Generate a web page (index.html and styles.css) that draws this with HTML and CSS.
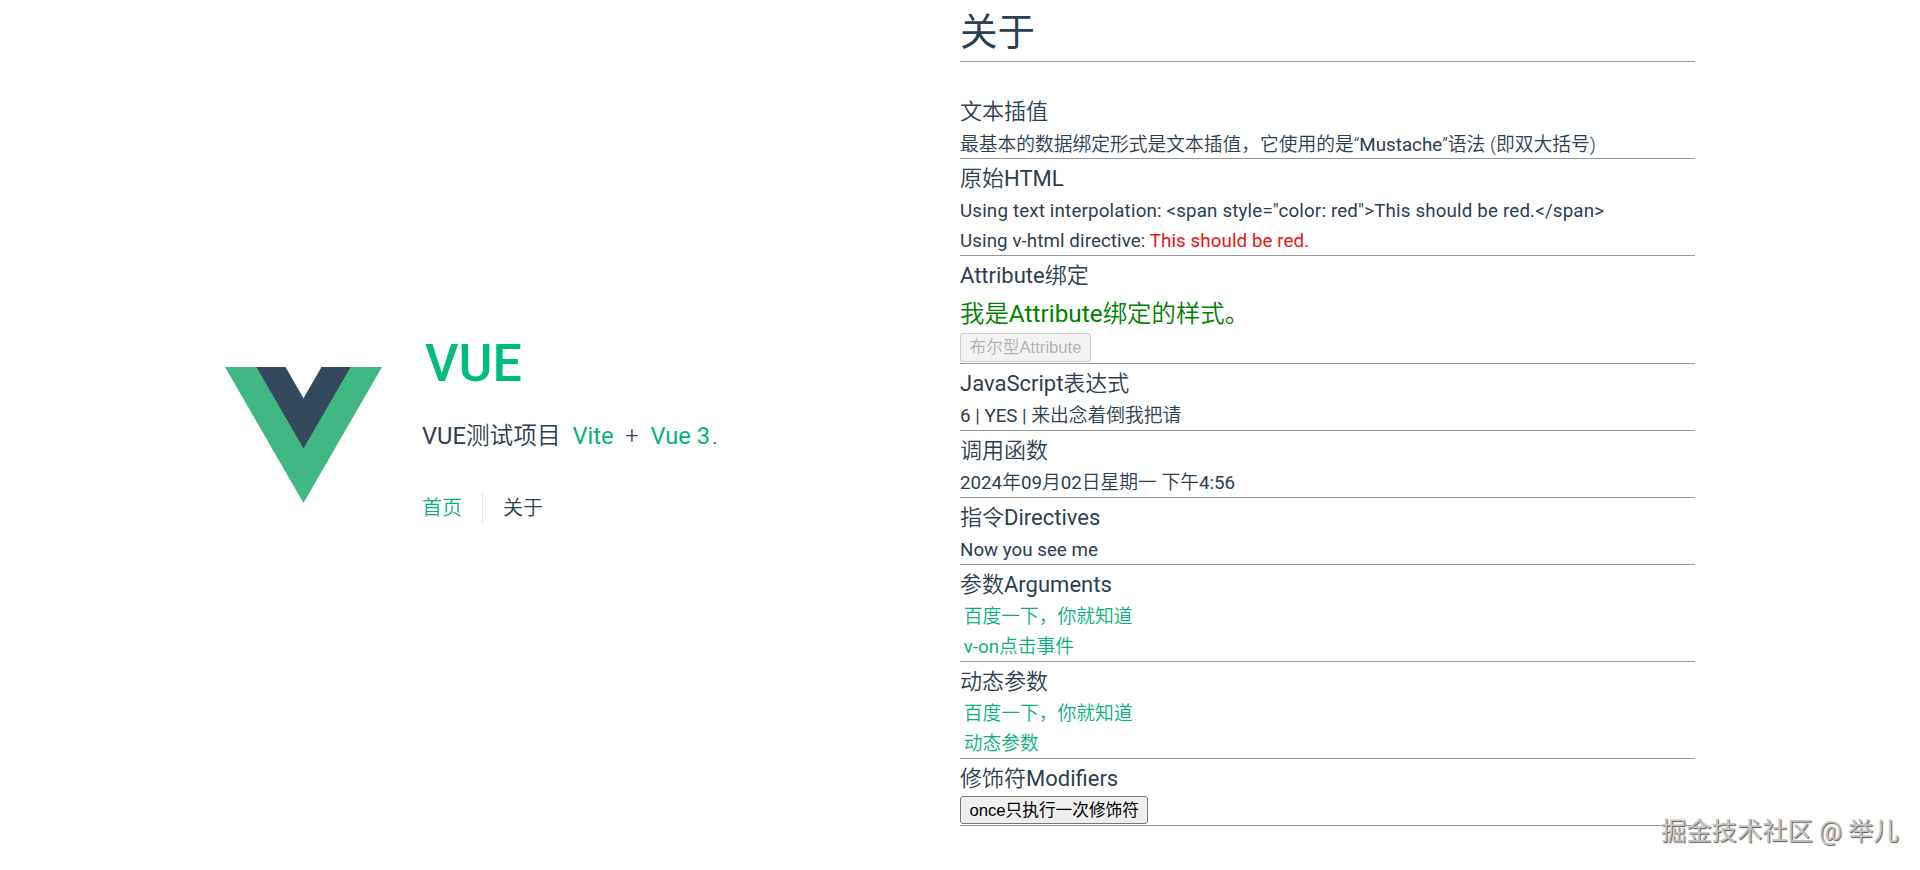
FILE: index.html
```html
<!DOCTYPE html>
<html lang="zh-CN">
<head>
<meta charset="utf-8">
<title>VUE</title>
<link rel="stylesheet" href="styles.css">
</head>
<body>
<div class="app">
  <header class="header">
    <svg class="logo" viewBox="0 0 261.76 226.69" aria-label="Vue logo"><path d="M161.096.001l-30.225 52.351L100.647.001H-.005l130.877 226.688L261.749.001z" fill="#41b883"/><path d="M161.096.001l-30.225 52.351L100.647.001H52.346l78.526 136.01L209.398.001z" fill="#34495e"/></svg>
    <div class="intro">
      <h1 class="brand">VUE</h1>
      <h3 class="tagline"><span class="en">VUE</span>测试项目 <a class="link en" href="#">Vite</a> + <a class="link en" href="#">Vue 3</a>.</h3>
      <nav class="nav"><a class="nav-item active" href="#">首页</a><a class="nav-item" href="#">关于</a></nav>
    </div>
  </header>
  <main class="about">
    <h1 class="title">关于</h1>
    <section class="block">
      <h3 class="heading">文本插值</h3>
      <p class="row first">最基本的数据绑定形式是文本插值，它使用的是“<span class="en">Mustache</span>”语法 (即双大括号)</p>
    </section>
    <section class="block">
      <h3 class="heading">原始<span class="en">HTML</span></h3>
      <p class="row en wide">Using text interpolation: &lt;span style="color: red"&gt;This should be red.&lt;/span&gt;</p>
      <p class="row en semi-wide">Using v-html directive: <span class="red">This should be red.</span></p>
    </section>
    <section class="block">
      <h3 class="heading"><span class="en">Attribute</span>绑定</h3>
      <p class="row large">我是<span class="en">Attribute</span>绑定的样式。</p>
      <div class="btn-row"><button class="btn" disabled>布尔型Attribute</button></div>
    </section>
    <section class="block">
      <h3 class="heading"><span class="en">JavaScript</span>表达式</h3>
      <p class="row"><span class="en">6 | YES |</span> 来出念着倒我把请</p>
    </section>
    <section class="block">
      <h3 class="heading">调用函数</h3>
      <p class="row"><span class="en">2024</span>年<span class="en">09</span>月<span class="en">02</span>日星期一 下午<span class="en">4:56</span></p>
    </section>
    <section class="block">
      <h3 class="heading">指令<span class="en">Directives</span></h3>
      <p class="row en">Now you see me</p>
    </section>
    <section class="block">
      <h3 class="heading">参数<span class="en">Arguments</span></h3>
      <p class="row"><a class="link" href="#">百度一下，你就知道</a></p>
      <p class="row"><a class="link" href="#"><span class="en">v-on</span>点击事件</a></p>
    </section>
    <section class="block">
      <h3 class="heading">动态参数</h3>
      <p class="row"><a class="link" href="#">百度一下，你就知道</a></p>
      <p class="row"><a class="link" href="#">动态参数</a></p>
    </section>
    <section class="block">
      <h3 class="heading">修饰符<span class="en">Modifiers</span></h3>
      <div class="btn-row last"><button class="btn">once只执行一次修饰符</button></div>
    </section>
  </main>
</div>
<div class="watermark">掘金技术社区 @ 举儿</div>
</body>
</html>
```
FILE: styles.css
```css
* { box-sizing: border-box; }
html, body { margin: 0; padding: 0; }
body {
  background: #fff;
  color: #2c3e50;
  font-family: Roboto, "Noto Sans CJK SC", sans-serif;
  font-size: 18.75px;
  line-height: 30px;
  font-weight: 350;
  height: 870px;
  overflow: hidden;
}
h1, h3, p { margin: 0; font-weight: 350; }
a { text-decoration: none; }
.en { font-weight: 400; }
.app {
  display: grid;
  grid-template-columns: 760px 735px;
  width: 1495px;
  margin-left: 200px;
  height: 870px;
}
.header {
  display: flex;
  align-items: center;
  padding-left: 25px;
  height: 870px;
}
.logo { width: 157px; height: 136px; margin-right: 40px; flex: none; }
.intro { display: flex; flex-direction: column; padding-bottom: 20px; }
.brand {
  color: #00bd7e;
  font-size: 52px;
  line-height: 70px;
  height: 70px;
  padding: 2px 0 0 3px;
  font-weight: 500;
}
.tagline { font-size: 23.7px; line-height: 36px; margin-top: 21px; word-spacing: 2.2px; }
.link { color: #08b07e; padding: 0 3.75px; word-spacing: 0; }
.tagline .link:last-of-type { padding-right: 2px; }
.nav { display: flex; margin-top: 39px; font-size: 20px; line-height: 30px; }
.nav-item { color: #2c3e50; padding: 0 20px; border-left: 1px solid rgba(60,60,60,.12); }
.nav-item:first-child { border-left: 0; padding-left: 0; }
.nav-item.active { color: #08b07e; }
.title {
  font-size: 37.5px;
  font-weight: 400;
  line-height: 60px;
  padding-top: 2px;
  border-bottom: 1px solid #999;
  height: 62px;
  margin-bottom: 30px;
}
.block { border-bottom: 1px solid #999; }
.heading { font-size: 22px; line-height: 36px; height: 36px; padding-top: 2px; }
.row { line-height: 30px; height: 30px; padding-top: 1px; }
.row.first { padding-top: 2px; }
.wide { letter-spacing: .16px; }
.semi-wide { letter-spacing: .08px; }
.large { font-size: 24.4px; line-height: 39px; height: 39px; padding-top: 2px; color: #008000; }
.red { color: #e81515; }
.btn-row { height: 32px; padding-top: 2px; }
.btn-row.last { height: 30px; padding-top: 1px; }
.btn {
  font-family: "Liberation Sans", "Noto Sans CJK SC", sans-serif;
  font-size: 16.67px;
  font-weight: 400;
  line-height: 20px;
  height: 29px;
  padding: 1px 8.5px 0;
  background: #efefef;
  border: 1px solid #767676;
  border-radius: 3px;
  color: #000;
  display: block;
}
.last .btn { height: 28px; }
.btn:disabled {
  color: rgba(16,16,16,.3);
  border-color: rgba(118,118,118,.3);
  background: rgba(239,239,239,.8);
}
.watermark {
  position: absolute;
  left: 1661px;
  top: 814px;
  font-size: 25.3px;
  font-weight: 400;
  line-height: 36px;
  color: #c4c4c4;
  text-shadow: 1px 1px 1px #555;
  white-space: nowrap;
}
```
